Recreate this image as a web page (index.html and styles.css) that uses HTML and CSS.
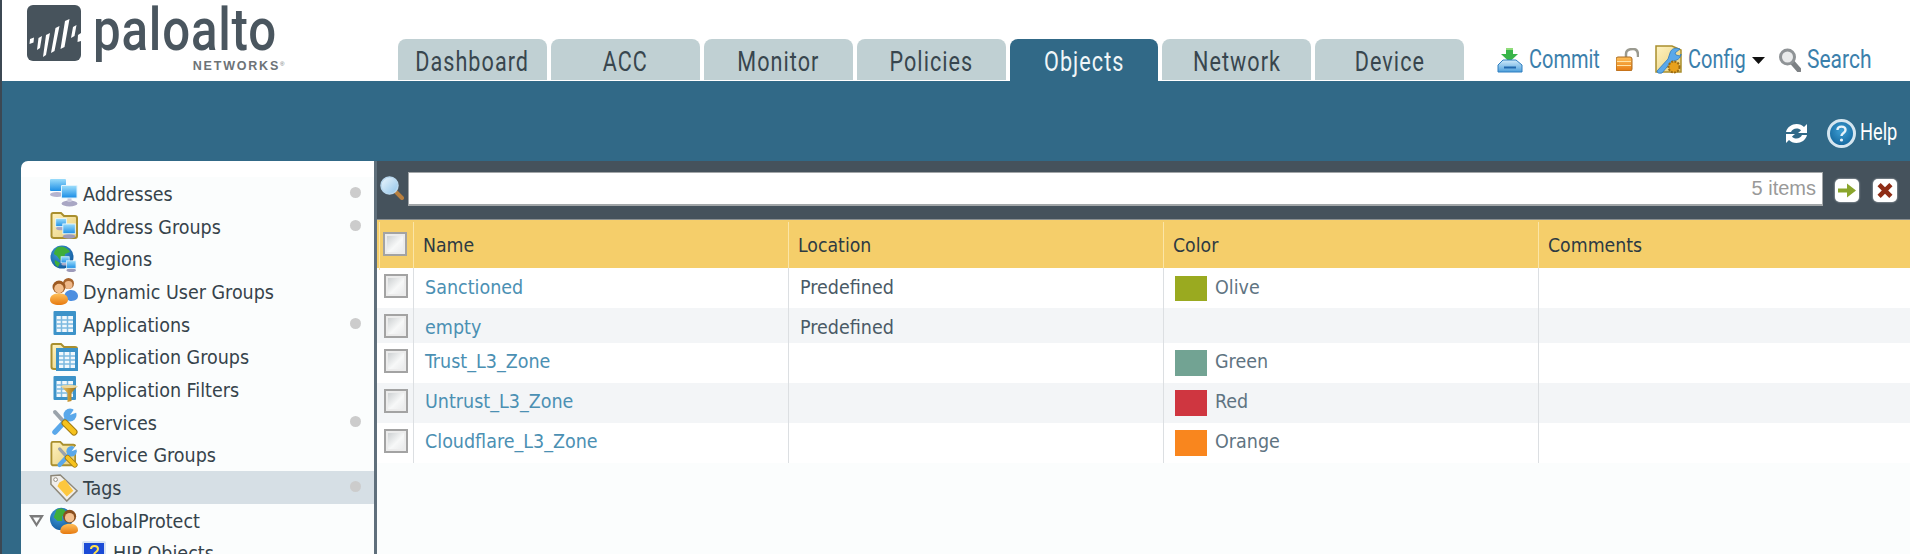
FILE: index.html
```html
<!DOCTYPE html>
<html lang="en">
<head>
<meta charset="utf-8">
<title>Objects</title>
<link rel="stylesheet" href="styles.css">
</head>
<body>
<svg class="defs" aria-hidden="true">
  <defs>
    <linearGradient id="gScreen" x1="0" y1="0" x2="0" y2="1"><stop offset="0" stop-color="#9adcfb"/><stop offset="1" stop-color="#1d8fe6"/></linearGradient>
    <linearGradient id="gFolder" x1="0" y1="0" x2="1" y2="1"><stop offset="0" stop-color="#fff3c0"/><stop offset="1" stop-color="#e6cd7a"/></linearGradient>
    <radialGradient id="gBall" cx=".4" cy=".35" r=".8"><stop offset="0" stop-color="#3f9fdc"/><stop offset="1" stop-color="#0b4f94"/></radialGradient>
    <radialGradient id="gHelp" cx=".5" cy=".4" r=".7"><stop offset="0" stop-color="#3d9ed4"/><stop offset="1" stop-color="#0c5c92"/></radialGradient>
    <linearGradient id="gOrange" x1="0" y1="0" x2="0" y2="1"><stop offset="0" stop-color="#ffc05a"/><stop offset="1" stop-color="#e67a10"/></linearGradient>
    <linearGradient id="gTray" x1="0" y1="0" x2="0" y2="1"><stop offset="0" stop-color="#cfeafa"/><stop offset="1" stop-color="#4d9fdb"/></linearGradient>
    <linearGradient id="gLens" x1="0" y1="0" x2="1" y2="1"><stop offset="0" stop-color="#eef7fd"/><stop offset="1" stop-color="#8fc4ea"/></linearGradient>
    <linearGradient id="gFunnel" x1="0" y1="0" x2="1" y2="0"><stop offset="0" stop-color="#e8c878"/><stop offset=".5" stop-color="#c8962f"/><stop offset="1" stop-color="#8a6c1f"/></linearGradient>

    <symbol id="i-net" viewBox="0 0 28 28">
      <ellipse cx="7" cy="15.500" rx="7" ry="2.600" fill="#b6b4cf"/>
      <rect x="0" y="0" width="16" height="12" rx="1" fill="url(#gScreen)"/>
      <ellipse cx="19.500" cy="24.500" rx="8" ry="3" fill="#a9a7c4"/>
      <rect x="17.500" y="19" width="4" height="4" fill="#c9c8dc"/>
      <rect x="11" y="6" width="16.500" height="13.500" rx="1" fill="#dff3fd"/>
      <rect x="12" y="7" width="14.500" height="11.500" fill="url(#gScreen)"/>
    </symbol>
    <symbol id="i-netsmall" viewBox="0 0 28 28">
      <ellipse cx="9" cy="15" rx="5.500" ry="2" fill="#a9a7c4"/>
      <rect x="3" y="4" width="12" height="9" fill="url(#gScreen)" stroke="#e8f6fd"/>
      <ellipse cx="18" cy="24" rx="7" ry="2.600" fill="#9d9bba"/>
      <rect x="11" y="10" width="14" height="11" fill="url(#gScreen)" stroke="#e8f6fd"/>
    </symbol>
    <symbol id="i-folder" viewBox="0 0 28 28">
      <path d="M1.500 24V2.500Q1.500 1 3 1H11L14 4H25Q27 4 27 6V24Q27 26 25 26H4Q1.500 26 1.500 24Z" fill="url(#gFolder)" stroke="#a98f2e" stroke-width="2"/>
    </symbol>
    <symbol id="i-groups" viewBox="0 0 28 28">
      <use href="#i-folder" width="28" height="28"/>
      <use href="#i-netsmall" x="3" y="3" width="25" height="25"/>
    </symbol>
    <symbol id="i-globe" viewBox="0 0 28 28">
      <circle cx="12" cy="12" r="11.500" fill="url(#gBall)"/>
      <path d="M8 2C13 1 18 3 20 7L15 9 14 14 10 15 7 11 4 9C4 6 6 3 8 2Z" fill="#3fae3a"/>
      <path d="M5 15L10 18 8 22C6 21 4 18 5 15Z" fill="#3fae3a"/>
      <use href="#i-netsmall" x="9" y="9" width="19" height="19"/>
    </symbol>
    <symbol id="i-users" viewBox="0 0 28 28">
      <circle cx="18.500" cy="6.500" r="5.500" fill="#a9652c"/>
      <circle cx="18.500" cy="8" r="4" fill="#efb98a"/>
      <path d="M14 21C14 15 18 13 21 13 25 13 28 16 28 19 28 23 24 24 20 24Z" fill="#4d8fe0"/>
      <circle cx="9" cy="10" r="6.500" fill="#9d5a22"/>
      <circle cx="9" cy="11.500" r="4.700" fill="#f3c08e"/>
      <path d="M0 23C0 18 4 16.500 9 16.500 14 16.500 18 18 18 23 18 26 14 28 9 28 4 28 0 26 0 23Z" fill="url(#gOrange)"/>
    </symbol>
    <symbol id="i-table" viewBox="0 0 28 28">
      <rect x="3.500" y="1" width="22.500" height="24" rx="1" fill="#3d93c9"/>
      <rect x="6.500" y="6" width="16.500" height="16" fill="#f2f8fc"/>
      <path d="M6.500 10H23M6.500 14H23M6.500 18H23M11.500 6V22M17.500 6V22" stroke="#7db9e0" stroke-width="1.500"/>
    </symbol>
    <symbol id="i-appgroups" viewBox="0 0 28 28">
      <use href="#i-folder" width="28" height="28"/>
      <rect x="6" y="5" width="22" height="23" fill="#3d93c9"/>
      <rect x="9" y="9" width="16" height="16" fill="#f2f8fc"/>
      <path d="M9 13H25M9 17H25M9 21H25M14 9V25M20 9V25" stroke="#7db9e0" stroke-width="1.500"/>
    </symbol>
    <symbol id="i-filter" viewBox="0 0 28 28">
      <use href="#i-table" width="28" height="28"/>
      <path d="M11 11H27.500L21.500 18V26L17.500 27V18Z" fill="url(#gFunnel)"/>
      <ellipse cx="19.300" cy="11.500" rx="8.200" ry="1.600" fill="#ecd9a0"/>
    </symbol>
    <symbol id="i-tools" viewBox="0 0 28 28">
      <path d="M5 4L14 14" stroke="#9aa3ab" stroke-width="4" stroke-linecap="round"/>
      <path d="M5 24L18 10" stroke="#5aa8ea" stroke-width="5.500" stroke-linecap="round"/>
      <circle cx="20" cy="7" r="6.500" fill="#5aa8ea"/>
      <path d="M20 7L25 0 28 4Z" fill="#fbfdfd"/>
      <path d="M15 15L24 24" stroke="#a17a10" stroke-width="7" stroke-linecap="round"/>
      <path d="M15 15L24 24" stroke="#f6c21c" stroke-width="5" stroke-linecap="round"/>
    </symbol>
    <symbol id="i-svcgroups" viewBox="0 0 30 30">
      <use href="#i-folder" width="28" height="28"/>
      <use href="#i-tools" x="6" y="4" width="24" height="26"/>
    </symbol>
    <symbol id="i-tag" viewBox="0 0 30 30">
      <path d="M1 2L11 1 29 18 18 29 1 11Z" fill="#f0eeea" stroke="#8d8778" stroke-width="1.600"/>
      <path d="M10 9L16 6 25 18 18 24 8 13Z" fill="#fdc73e"/>
      <circle cx="6" cy="6" r="2" fill="#fff" stroke="#8d8778"/>
    </symbol>
    <symbol id="i-gp" viewBox="0 0 30 30">
      <circle cx="12" cy="14" r="12" fill="url(#gBall)"/>
      <path d="M7 4C12 1 16 3 18 8L13 11 13 16 8 16 4 12Z" fill="#3fae3a"/>
      <circle cx="21" cy="11" r="7" fill="#8a4f1e"/>
      <circle cx="21" cy="12.500" r="5" fill="#f3c08e"/>
      <path d="M11 27C11 21 16 19 21 19 26 19 30 21 30 26 30 29 25 30 20 30 15 30 11 30 11 27Z" fill="url(#gOrange)"/>
    </symbol>
    <symbol id="i-hip" viewBox="0 0 24 24">
      <rect x="0" y="0" width="24" height="24" rx="2" fill="#d7e3f3"/>
      <rect x="2" y="2" width="20" height="20" fill="#1b4bd6"/>
      <path d="M9 8C9 4 16 4 16 8 16 11 12 11 12 14" stroke="#ffe14a" stroke-width="2" fill="none"/>
      <circle cx="12" cy="18" r="1.400" fill="#ffe14a"/>
    </symbol>
  </defs>
</svg>

<div class="page">
  <header class="top">
    <div class="logo">
      <svg class="logo-mark" viewBox="0 0 54 56" aria-hidden="true">
        <rect width="54" height="56" rx="6" fill="#47535c"/>
        <path d="M3 34l4-1.500-.5 5-4 1.500zM11.500 33l3.500-2-2 12-3 2zM19 30l4-2-4 22-3 2zM28.500 23l4-2-5 25-3.500 2zM38 16l4.500-2-5 28-4 2zM46 22l3.500-2-2 11-3.500 2zM51 30l3-2v8l-3.500 1z" fill="#fff"/>
      </svg>
      <div class="logo-words">
        <span class="logo-name">paloalto</span>
        <span class="logo-sub">NETWORKS<sup class="logo-reg">®</sup></span>
      </div>
    </div>
    <nav class="tabs">
      <a class="tab"><span class="tab-text">Dashboard</span></a>
      <a class="tab"><span class="tab-text">ACC</span></a>
      <a class="tab"><span class="tab-text">Monitor</span></a>
      <a class="tab"><span class="tab-text">Policies</span></a>
      <a class="tab tab-on"><span class="tab-text">Objects</span></a>
      <a class="tab"><span class="tab-text">Network</span></a>
      <a class="tab"><span class="tab-text">Device</span></a>
    </nav>
    <div class="tools">
      <svg class="ic-commit" viewBox="0 0 26 26" aria-hidden="true">
        <path d="M9 1H16V7H21L12.500 15 4 7H9Z" fill="#39b54a"/>
        <path d="M9 1H16V3H9Z" fill="#8fdc7a"/>
        <path d="M6 13H19L25 18V25H1V18Z" fill="url(#gTray)" stroke="#2f7fc0"/>
        <rect x="7" y="19.500" width="12" height="2" fill="#2168ad"/>
      </svg>
      <span class="tool-text tool-commit">Commit</span>
      <svg class="ic-lock" viewBox="0 0 23 23" aria-hidden="true">
        <path d="M10 9V6C10 2 14 1 17 1S22 3 22 7V9" fill="none" stroke="#9a9a90" stroke-width="2.500"/>
        <rect x="0" y="9" width="16" height="14" rx="2" fill="url(#gOrange)" stroke="#a96a20"/>
        <path d="M1 13.500H15M1 17.500H15" stroke="#ffe3a6" stroke-width="1.200"/>
      </svg>
      <svg class="ic-config" viewBox="0 0 27 29" aria-hidden="true">
        <path d="M1 1H17L26 5V27H1Z" fill="url(#gFolder)" stroke="#a98f2e" stroke-width="1.500"/>
        <path d="M2 26L13 14 15 8C16 4 20 2 25 4L20 8 21 10 25 11 26 9C26 13 22 16 17 16L7 28Q2 29 2 26Z" fill="#5aa8ea" stroke="#2d78bb" stroke-width=".8"/>
        <circle cx="19" cy="22" r="5.500" fill="#e8a11c" stroke="#9b6a10" stroke-dasharray="2 1.200" stroke-width="2"/>
      </svg>
      <span class="tool-text tool-config">Config</span>
      <svg class="ic-caret" viewBox="0 0 13 7" aria-hidden="true"><path d="M0 0H13L6.500 7Z" fill="#111"/></svg>
      <svg class="ic-search" viewBox="0 0 22 24" aria-hidden="true">
        <path d="M13 14L20 22" stroke="#7d8184" stroke-width="5" stroke-linecap="round"/>
        <circle cx="8.500" cy="9" r="7" fill="#e9eaeb" stroke="#8f9396" stroke-width="3"/>
      </svg>
      <span class="tool-text tool-search">Search</span>
    </div>
  </header>

  <div class="bar">
    <svg class="ic-refresh" viewBox="0 0 25 21" aria-hidden="true">
      <path d="M2 9C3 4 8 1 12.500 1 16 1 18 2 20 4L23 1V10H14L17 7.500C16 6 14.500 5.500 12.500 5.500 10 5.500 8 7 7 9Z" fill="#fff"/>
      <path d="M23 12C22 17 17 20 12.500 20 9 20 7 19 5 17L2 20V11H11L8 13.500C9 15 10.500 15.500 12.500 15.500 15 15.500 17 14 18 12Z" fill="#fff"/>
    </svg>
    <svg class="ic-help" viewBox="0 0 29 29" aria-hidden="true">
      <circle cx="14.500" cy="14.500" r="13" fill="url(#gHelp)" stroke="#d5e6f0" stroke-width="3"/>
      <path d="M10.500 11C10.500 6.500 18.500 6.500 18.500 11 18.500 14 14.500 14 14.500 17" fill="none" stroke="#e8f3f9" stroke-width="2.400"/>
      <circle cx="14.500" cy="21" r="1.600" fill="#e8f3f9"/>
    </svg>
    <span class="help-text">Help</span>
  </div>

  <div class="main">
    <aside class="side">
      <ul class="tree">
        <li class="node"><svg class="nicon"><use href="#i-net"/></svg><span class="nlabel">Addresses</span><i class="dot"></i></li>
        <li class="node"><svg class="nicon"><use href="#i-groups"/></svg><span class="nlabel">Address Groups</span><i class="dot"></i></li>
        <li class="node"><svg class="nicon"><use href="#i-globe"/></svg><span class="nlabel">Regions</span></li>
        <li class="node"><svg class="nicon"><use href="#i-users"/></svg><span class="nlabel">Dynamic User Groups</span></li>
        <li class="node"><svg class="nicon"><use href="#i-table"/></svg><span class="nlabel">Applications</span><i class="dot"></i></li>
        <li class="node"><svg class="nicon"><use href="#i-appgroups"/></svg><span class="nlabel">Application Groups</span></li>
        <li class="node"><svg class="nicon"><use href="#i-filter"/></svg><span class="nlabel">Application Filters</span></li>
        <li class="node"><svg class="nicon"><use href="#i-tools"/></svg><span class="nlabel">Services</span><i class="dot"></i></li>
        <li class="node"><svg class="nicon"><use href="#i-svcgroups"/></svg><span class="nlabel">Service Groups</span></li>
        <li class="node node-on"><svg class="nicon"><use href="#i-tag"/></svg><span class="nlabel">Tags</span><i class="dot"></i></li>
        <li class="node"><svg class="twist" viewBox="0 0 17 14" aria-hidden="true"><path d="M1 1H16L8.500 13Z M5 3.500L8.500 9 12 3.500Z" fill="#7b7b7b" fill-rule="evenodd"/></svg><svg class="nicon nicon-gp"><use href="#i-gp"/></svg><span class="nlabel">GlobalProtect</span></li>
        <li class="node node-child"><svg class="nicon-hip"><use href="#i-hip"/></svg><span class="nlabel">HIP Objects</span></li>
      </ul>
    </aside>

    <section class="content">
      <div class="filter">
        <svg class="ic-find" viewBox="0 0 24 24" aria-hidden="true">
          <path d="M15 15L22 22" stroke="#b9803f" stroke-width="4" stroke-linecap="round"/>
          <circle cx="9.500" cy="9.500" r="8.500" fill="url(#gLens)" stroke="#b9d8ef" stroke-width="1.500"/>
        </svg>
        <div class="field"><span class="count">5 items</span></div>
        <span class="fbtn"><svg viewBox="0 0 18 14" aria-hidden="true"><path d="M0 5H9V0L18 7 9 14V9H0Z" fill="#8aa52c"/></svg></span>
        <span class="fbtn"><svg viewBox="0 0 14 14" aria-hidden="true"><path d="M0 3L3 0 7 4 11 0 14 3 10 7 14 11 11 14 7 10 3 14 0 11 4 7Z" fill="#8f2d16"/></svg></span>
      </div>

      <div class="thead grid">
        <div class="hcell hcell-check"><span class="check"></span></div>
        <div class="hcell">Name</div>
        <div class="hcell">Location</div>
        <div class="hcell">Color</div>
        <div class="hcell">Comments</div>
      </div>

      <div class="row row-low grid">
        <div class="cell cell-check"><span class="check"></span></div>
        <div class="cell link">Sanctioned</div>
        <div class="cell">Predefined</div>
        <div class="cell cell-color"><span class="swatch s-olive"></span>Olive</div>
        <div class="cell"></div>
      </div>
      <div class="row row-alt row-short row-low grid">
        <div class="cell cell-check"><span class="check"></span></div>
        <div class="cell link">empty</div>
        <div class="cell">Predefined</div>
        <div class="cell"></div>
        <div class="cell"></div>
      </div>
      <div class="row grid">
        <div class="cell cell-check"><span class="check"></span></div>
        <div class="cell link">Trust_L3_Zone</div>
        <div class="cell"></div>
        <div class="cell cell-color"><span class="swatch s-green"></span>Green</div>
        <div class="cell"></div>
      </div>
      <div class="row row-alt grid">
        <div class="cell cell-check"><span class="check"></span></div>
        <div class="cell link">Untrust_L3_Zone</div>
        <div class="cell"></div>
        <div class="cell cell-color"><span class="swatch s-red"></span>Red</div>
        <div class="cell"></div>
      </div>
      <div class="row grid">
        <div class="cell cell-check"><span class="check"></span></div>
        <div class="cell link">Cloudflare_L3_Zone</div>
        <div class="cell"></div>
        <div class="cell cell-color"><span class="swatch s-orange"></span>Orange</div>
        <div class="cell"></div>
      </div>
    </section>
  </div>
</div>
</body>
</html>
```

FILE: styles.css
```css
* { box-sizing: border-box; }
html, body { margin: 0; padding: 0; height: 100%; overflow: hidden; background: #fff; }
body { font-family: "DejaVu Sans Condensed", "DejaVu Sans", sans-serif; font-stretch: condensed; }
.defs { position: absolute; width: 0; height: 0; }

.page { height: 554px; display: flex; flex-direction: column; border-left: 2px solid #3c4853; }

/* header */
.top { height: 81px; display: flex; background: #fff; flex: none; }
.logo { width: 396px; display: flex; padding: 5px 0 0 24.500px; flex: none; }
.logo-mark { width: 54px; height: 56px; flex: none; }
.logo-words { display: flex; flex-direction: column; margin-left: 12px; width: 192px; }
.logo-name { display: block; font-family: Roboto, sans-serif; font-stretch: normal; font-weight: 500; font-size: 60px; line-height: 50px; letter-spacing: 1px; color: #4a565f; transform: scaleX(.82); transform-origin: left center; white-space: nowrap; }
.logo-sub { font-family: "Liberation Sans", sans-serif; font-stretch: normal; font-size: 12.500px; line-height: 12px; font-weight: 700; letter-spacing: 1.800px; color: #6d7377; text-align: right; margin-top: 5px; white-space: nowrap; }
.logo-reg { font-size: 6px; font-weight: 400; line-height: 0; vertical-align: 4px; letter-spacing: 0; }

.tabs { display: flex; gap: 4px; align-self: flex-end; flex: none; }
.tab { width: 148.900px; height: 41px; margin-bottom: 1px; padding-top: 4px; background: #c0d0d3; border-radius: 8px 8px 0 0; color: #38464e; text-align: center; font-family: Roboto, sans-serif; font-stretch: normal; font-weight: 400; font-size: 27px; line-height: 38px; letter-spacing: 1.300px; }
.tab-text { display: inline-block; transform: scaleX(.8); white-space: nowrap; }
.tab-on { height: 42px; margin-bottom: 0; background: #316987; color: #f0f6f8; }

.tools { display: flex; align-items: center; padding: 38px 0 0 33px; height: 81px; font-family: Roboto, sans-serif; font-stretch: normal; }
.tool-text { display: block; font-size: 25px; line-height: 28px; color: #3b80ac; transform: scaleX(.8); transform-origin: left center; white-space: nowrap; flex: none; }
.tool-commit { width: 70px; }
.tool-config { width: 58px; }
.tool-search { width: 64px; transform: scaleX(.84); }
.ic-commit { width: 26px; height: 26px; margin-right: 6px; flex: none; }
.ic-lock { width: 23px; height: 23px; margin: 0 16px 0 17px; flex: none; }
.ic-config { width: 27px; height: 29px; margin-right: 6px; flex: none; }
.ic-caret { width: 13px; height: 7px; margin: 2px 14px 0 6px; flex: none; }
.ic-search { width: 22px; height: 24px; margin-right: 6px; flex: none; }

/* blue band */
.bar { height: 80px; flex: none; background: #316987; display: flex; justify-content: flex-end; align-items: center; padding: 25px 15px 0 0; }
.ic-refresh { width: 25px; height: 21px; margin-right: 18px; flex: none; }
.ic-help { width: 29px; height: 29px; margin-right: 4px; flex: none; }
.help-text { display: block; width: 35px; font-family: Roboto, sans-serif; font-stretch: normal; font-size: 24px; color: #fff; line-height: 26px; margin-bottom: 3px; transform: scaleX(.76); transform-origin: left center; white-space: nowrap; }

/* main */
.main { flex: 1; min-height: 0; display: flex; background: #316987; padding-left: 19px; }
.side { width: 353px; flex: none; background: #fff; border-radius: 7px 0 0 0; padding-top: 16px; overflow: hidden; }
.tree { list-style: none; margin: 0; padding: 0; background: #fbfdfd; }
.node { position: relative; height: 32.700px; display: flex; align-items: center; padding-left: 29px; font-size: 19.500px; color: #36434b; }
.node-on { background: #d6dfe5; }
.node-child { padding-left: 61px; }
.nicon { width: 28px; height: 28px; margin-right: 5px; flex: none; }
.nicon-gp { margin-right: 4px; }
.nicon-hip { width: 24px; height: 24px; margin-right: 7px; flex: none; }
.twist { width: 17px; height: 14px; position: absolute; left: 7px; top: 10px; }
.nlabel { white-space: nowrap; padding-top: 2px; }
.dot { position: absolute; right: 13px; top: 10px; width: 11px; height: 11px; border-radius: 50%; background: #ccc; }

.content { flex: 1; min-width: 0; background: #fbfdfd; border-left: 3px solid #5f6f7b; }
.filter { height: 59px; display: flex; align-items: flex-start; background: #45525c; padding: 11px 0 0 3px; border-bottom: 1px solid #8a8f8f; }
.ic-find { width: 24px; height: 24px; margin: 4px 4px 0 0; flex: none; }
.field { width: 1415px; height: 34px; flex: none; background: #fff; border: 1px solid #a2a6a8; border-bottom-width: 2px; text-align: right; padding-right: 6px; font-family: "Liberation Sans", sans-serif; font-stretch: normal; font-size: 20px; line-height: 31px; color: #999; margin-right: 12px; }
.fbtn { width: 24px; height: 23px; margin: 7px 14px 0 0; flex: none; background: #fff; border-radius: 5px; display: flex; align-items: center; justify-content: center; box-shadow: 0 0 2px #dfe4e6; }
.fbtn svg { width: 18px; height: 15px; }

.grid { display: grid; grid-template-columns: 36px 375px 375px 375px 1fr; }
.thead { height: 48px; padding-top: 2px; background: #f5ce6a; font-size: 19.300px; color: #2d3a42; }
.hcell { border-left: 1px solid #fbe5a6; padding-left: 9px; line-height: 48px; }
.hcell-check { margin-left: 2px; padding: 10px 0 0 3px; }
.row { height: 40px; background: #fff; font-size: 19.500px; color: #4a5a66; }
.row-alt { background: #f3f5f7; }
.row-short { height: 35px; }
.cell { border-left: 1px solid #dcdfe2; padding-left: 11px; line-height: 37px; white-space: nowrap; }
.row-low .cell { padding-top: 1px; }
.cell-check, .row-low .cell-check { border-left: 0; padding: 6px 0 0 7px; }
.cell-color { padding-left: 11px; display: flex; align-items: flex-start; color: #5f7482; }
.link { color: #4b90b3; }
.check { display: block; width: 24px; height: 24px; border: 2px solid #a3a3a3; box-shadow: inset 0 0 0 2px #ececec; background: linear-gradient(135deg, #c4c8ca, #f7f8f8 55%, #e6e7e8); }
.swatch { width: 32px; height: 26px; margin: 7px 8px 0 0; flex: none; }
.s-olive { background: #9aaa20; height: 25px; }
.s-green { background: #72a393; }
.s-red { background: #cf3640; }
.s-orange { background: #f9861e; }
```
